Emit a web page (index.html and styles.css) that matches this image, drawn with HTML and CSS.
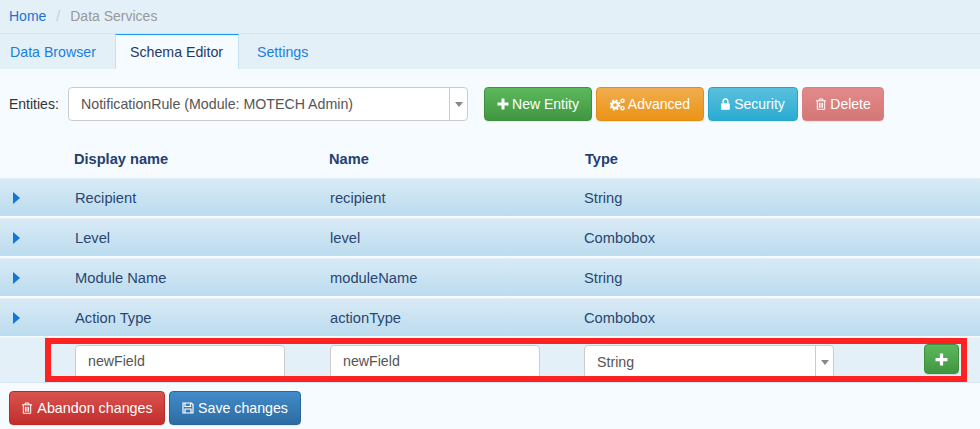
FILE: index.html
```html
<!DOCTYPE html>
<html>
<head>
<meta charset="utf-8">
<title>Data Services</title>
<link rel="stylesheet" href="styles.css">
</head>
<body>
<nav class="crumbs"><a class="link">Home</a><span class="sep">/</span><span class="current">Data Services</span></nav>
<div class="tabs">
  <a class="tab">Data Browser</a>
  <a class="tab active">Schema Editor</a>
  <a class="tab">Settings</a>
</div>
<div class="toolbar">
  <label class="ent-label">Entities:</label>
  <div class="select ent-select"><span class="select-text">NotificationRule (Module: MOTECH Admin)</span><span class="caret-box"><i class="caret"></i></span></div>
  <div class="actions">
    <button class="btn green w-new"><svg class="ico" viewBox="0 0 12 12"><path d="M4.500 0.500h3v4h4v3h-4v4h-3v-4h-4v-3h4z" fill="currentColor"/></svg>New Entity</button>
    <button class="btn orange w-adv"><svg class="ico wide" viewBox="0 0 15 13"><g fill="none" stroke="currentColor"><circle cx="5" cy="7" r="3" stroke-width="2.400"/><circle cx="5" cy="7" r="4.700" stroke-width="1.800" stroke-dasharray="1.900 1.800"/><circle cx="12.500" cy="2.800" r="1.600" stroke-width="1.400"/><circle cx="12.500" cy="10.200" r="1.600" stroke-width="1.400"/></g></svg>Advanced</button>
    <button class="btn blue w-sec"><svg class="ico lock" viewBox="0 0 9 12"><path d="M.8 5.200h7.400a.6.600 0 0 1 .6.600v5.400a.6.600 0 0 1-.6.600H.8a.6.600 0 0 1-.6-.6V5.800a.6.600 0 0 1 .6-.6z" fill="currentColor"/><path d="M2.200 5.500V3.200a2.300 2.300 0 0 1 4.600 0v2.300" fill="none" stroke="currentColor" stroke-width="1.500"/></svg>Security</button>
    <button class="btn rose w-del"><svg class="ico" viewBox="0 0 12 12"><path d="M1 2.800h10M4.200 2.700V1h3.600v1.700M2.300 3v8.300h7.400V3M4.400 4.800v5M6 4.800v5M7.600 4.800v5" fill="none" stroke="currentColor" stroke-width="1"/></svg>Delete</button>
  </div>
</div>
<div class="grid-head row-cols">
  <span class="col-a">Display name</span><span class="col-b">Name</span><span class="col-c">Type</span>
</div>
<div class="rows">
  <div class="row row-cols"><i class="arrow"></i><span class="col-a">Recipient</span><span class="col-b">recipient</span><span class="col-c">String</span></div>
  <div class="row row-cols"><i class="arrow"></i><span class="col-a">Level</span><span class="col-b">level</span><span class="col-c">Combobox</span></div>
  <div class="row row-cols"><i class="arrow"></i><span class="col-a">Module Name</span><span class="col-b">moduleName</span><span class="col-c">String</span></div>
  <div class="row row-cols"><i class="arrow"></i><span class="col-a">Action Type</span><span class="col-b">actionType</span><span class="col-c">Combobox</span></div>
</div>
<div class="new-row">
  <div class="field f-a">newField</div>
  <div class="field f-b">newField</div>
  <div class="select f-c"><span class="select-text">String</span><span class="caret-box"><i class="caret"></i></span></div>
  <button class="btn green add"><svg class="ico add-ico" viewBox="0 0 12 12"><path d="M4.500 0.500h3v4h4v3h-4v4h-3v-4h-4v-3h4z" fill="currentColor"/></svg></button>
  <div class="highlight"></div>
</div>
<div class="footer">
  <button class="btn red w-aband"><svg class="ico" viewBox="0 0 12 12"><path d="M1 2.800h10M4.200 2.700V1h3.600v1.700M2.300 3v8.300h7.400V3M4.400 4.800v5M6 4.800v5M7.600 4.800v5" fill="none" stroke="currentColor" stroke-width="1"/></svg>Abandon changes</button>
  <button class="btn navy w-save"><svg class="ico" viewBox="0 0 12 12"><path d="M1 1h8.500L11 2.500V11H1zM3 1.500v3h5.500v-3M3 11V7h6v4" fill="none" stroke="currentColor" stroke-width="1.200"/></svg>Save changes</button>
</div>
</body>
</html>
```
FILE: styles.css
```css
* { box-sizing: border-box; }
html, body { margin: 0; padding: 0; }
body {
  width: 980px;
  height: 429px;
  overflow: hidden;
  background: #f6fbff;
  font: 14px/20px "Liberation Sans", Arial, sans-serif;
  color: #333;
}
.crumbs {
  height: 34px;
  padding: 6px 9px 0;
  background: #e3f0f8;
  border-bottom: 1px solid #d3e5f3;
}
.link { color: #1a73d8; }
.sep { color: #ccc; padding: 0 10px; }
.current { color: #999; }
.tabs {
  height: 35px;
  display: flex;
  background: #e3f0f8;
  font-size: 14.2px;
}
.tab {
  padding: 8px 10px 0;
  margin-right: 8px;
  color: #1a7ee0;
}
.tab:first-child { width: 115px; margin: 0; }
.tab.active {
  width: 124px;
  margin: 0;
  padding: 7px 0 0 14px;
  color: #1f3a63;
  background: #f6fbff;
  border: 1px solid #c6e0f5;
  border-top: 1px solid #1b9bf0;
  border-bottom: 0;
}
.tab:last-child { margin-left: 8px; }
.toolbar {
  display: flex;
  align-items: center;
  height: 34px;
  margin-top: 18px;
  padding-left: 9px;
}
.ent-label { width: 59px; color: #333; }
.select {
  display: flex;
  height: 34px;
  background: #fff;
  border: 1px solid #ccc;
  border-radius: 4px;
  color: #555;
}
.ent-select { width: 400px; font-size: 14.2px; }
.select-text { flex: 1; padding: 6px 12px; }
.caret-box {
  width: 18px;
  border-left: 1px solid #ccc;
  display: flex;
  align-items: center;
  justify-content: center;
}
.caret {
  width: 0;
  height: 0;
  border: 4px solid transparent;
  border-top: 5px solid #888;
  border-bottom: 0;
}
.actions { display: flex; gap: 4px; margin-left: 16px; }
.btn {
  height: 34px;
  padding: 0;
  display: inline-flex;
  align-items: center;
  justify-content: center;
  gap: 3px;
  border: 1px solid transparent;
  border-radius: 4px;
  color: #fff;
  font: inherit;
  box-shadow: 0 1px 1px rgba(0,0,0,.08);
}
.ico { width: 12px; height: 12px; flex: none; }
.ico.wide { width: 15px; height: 13px; }
.ico.lock { width: 9px; height: 12px; margin-right: 1px; }
.green { background: linear-gradient(#5cb85c, #419641); border-color: #3e8f3e; }
.orange { background: linear-gradient(#f0ad4e, #eb9316); border-color: #e38d13; }
.blue { background: linear-gradient(#5bc0de, #2aabd2); border-color: #28a4c9; }
.rose { background: linear-gradient(#e28a8a, #d47676); border-color: #d98080; }
.red { background: linear-gradient(#d9534f, #c12e2a); border-color: #b92c28; font-size: 14.3px; gap: 4px; }
.navy { background: linear-gradient(#428bca, #2d6ca2); border-color: #2b669a; font-size: 14.2px; gap: 4px; }
.w-new { width: 108px; }
.w-adv { width: 108px; }
.w-sec { width: 90px; }
.w-del { width: 82px; }
.row-cols { display: flex; align-items: center; position: relative; }
.col-a { position: absolute; left: 75px; }
.col-b { position: absolute; left: 330px; }
.col-c { position: absolute; left: 584px; }
.grid-head {
  height: 38px;
  margin-top: 19px;
  font-weight: bold;
  font-size: 14.6px;
  color: #24406f;
}
.grid-head .col-a { left: 74px; }
.grid-head .col-b { left: 329px; }
.grid-head .col-c { left: 585px; }
.rows { display: flex; flex-direction: column; gap: 2px; }
.row {
  height: 38px;
  font-size: 14.7px;
  background: linear-gradient(#d8eaf5, #bbdcef);
  border-top: 1px solid #e3f0f8;
  color: #2a4672;
}
.arrow {
  margin-left: 13px;
  width: 0;
  height: 0;
  border: 6px solid transparent;
  border-left: 7px solid #1175d9;
  border-right: 0;
}
.new-row {
  position: relative;
  height: 46px;
  margin-top: 1px;
  background: #e3f0f8;
  border-bottom: 1px solid #d3e5f3;
  border-top: 1px solid #eef6fb;
}
.field, .new-row .select { position: absolute; top: 7px; font-size: 14.2px; }
.add { position: absolute; top: 6px; }
.field {
  height: 34px;
  padding: 5px 12px;
  background: #fff;
  border: 1px solid #ccc;
  border-radius: 4px;
  color: #555;
}
.f-a { left: 75px; width: 210px; }
.f-b { left: 330px; width: 210px; }
.f-c { left: 584px; width: 250px; }
.add { left: 924px; width: 35px; height: 30px; }
.add-ico { width: 13px; height: 13px; }
.highlight {
  position: absolute;
  left: 45px;
  top: 0;
  width: 922px;
  height: 44px;
  border: 6px solid #ff2222;
}
.footer {
  display: flex;
  gap: 4px;
  padding: 8px 0 0 9px;
}
.w-aband { width: 156px; }
.w-save { width: 132px; }
```
